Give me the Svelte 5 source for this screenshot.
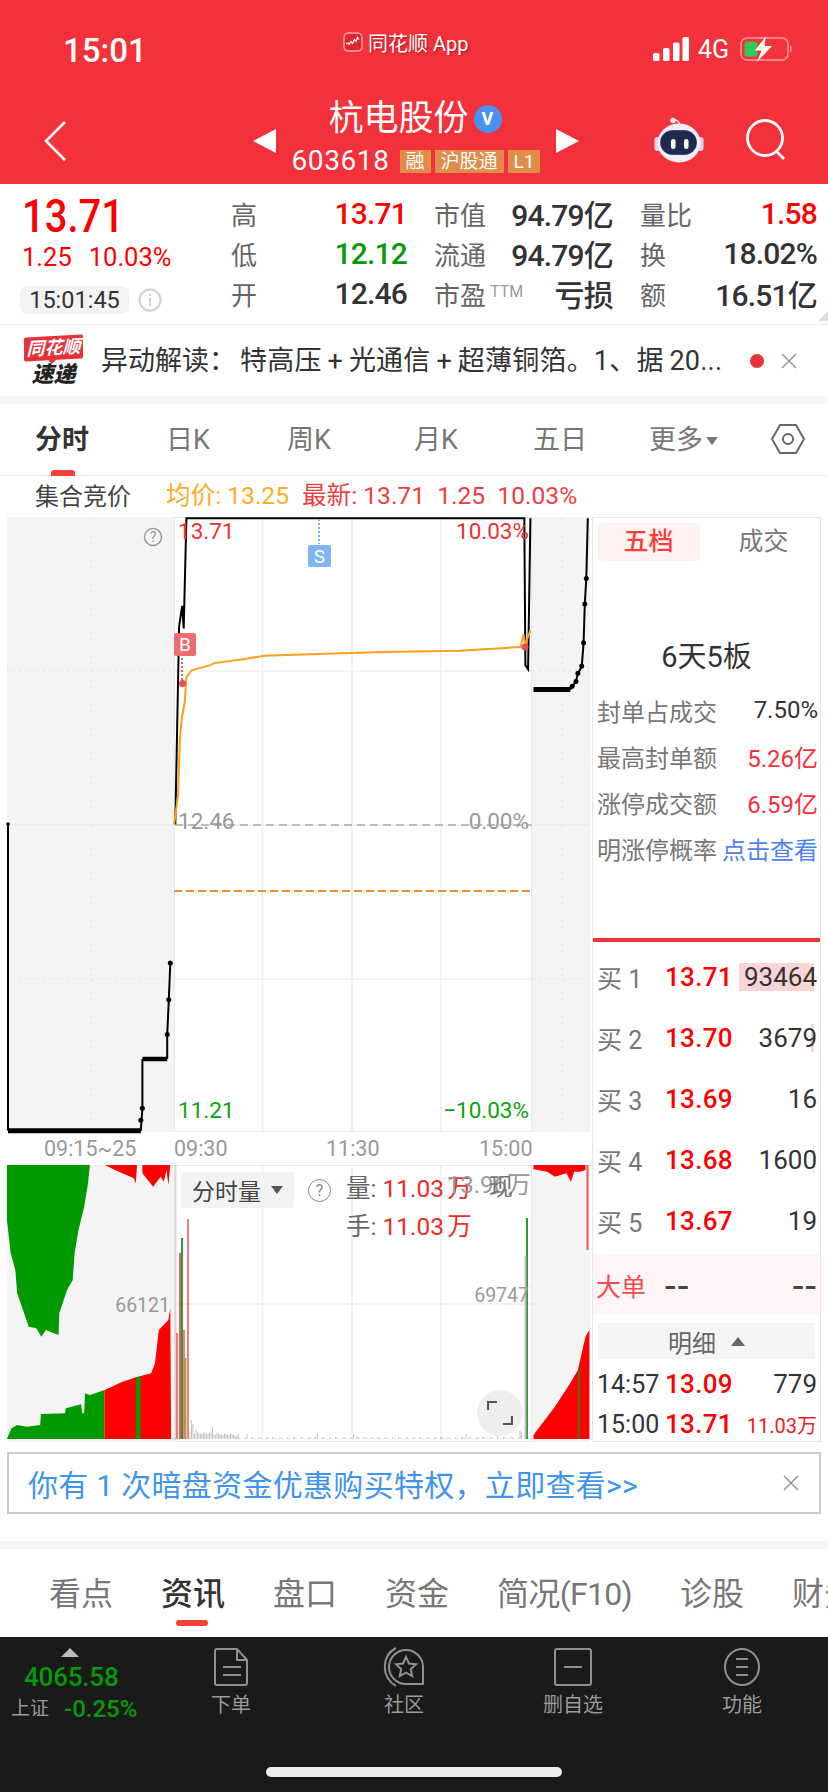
<script>
  // chart traces are kept in "trace units" and mapped to page pixels
  const px = (pts, sy, oy) => pts.map(([x, y]) => `${(x / 2.613).toFixed(1)},${(y / sy + oy).toFixed(1)}`).join(' ');
  const top = (pts) => px(pts, 2.45, 510);
  const vol = (pts) => px(pts, 3, 1140);
  const dot = ([x, y]) => ({ cx: x / 2.613, cy: y / 2.45 + 510 });

  const priceLine = top([[458,770],[468,285],[476,235],[480,290],[487,20],[1370,20],[1373,380],[1380,390],[1386,20]]);
  const avgLine = top([[455,770],[465,700],[470,560],[475,510],[483,470],[487,410],[500,393],[550,380],[560,375],[640,365],[690,357],[830,353],[1000,348],[1200,345],[1360,336],[1368,305],[1372,330],[1386,295]]);

  const preLine = top([[21,770],[21,1520]]);
  const preFlat = top([[21,1521],[368,1521]]);
  const preRise = top([[368,1521],[372,1466],[372,1345]]);
  const preStep = top([[372,1345],[437,1345]]);
  const preUp = top([[437,1345],[437,1285],[441,1200],[445,1110]]);
  const preDots = [[368,1495],[372,1466],[437,1285],[441,1200],[445,1110]].map(dot);

  const postFlat = top([[1394,440],[1490,440]]);
  const postUp = top([[1490,440],[1505,420],[1510,400],[1520,385],[1525,325],[1528,230],[1532,168],[1536,20]]);
  const postDots = [[1495,432],[1505,420],[1510,400],[1520,382],[1525,325],[1528,230],[1532,168]].map(dot);

  const auctionGreenTop = vol([[18,75],[235,75],[230,130],[220,200],[205,270],[195,340],[190,420],[175,450],[155,520],[153,585],[120,570],[108,590],[95,565],[75,560],[60,510],[45,460],[40,390],[28,340],[18,240]]);
  const auctionRedTop = vol([[275,75],[300,90],[350,115],[355,130],[358,75],[372,75],[372,100],[400,140],[420,110],[428,125],[435,90],[440,135],[445,75]]);
  const auctionGreen = vol([[18,897],[30,865],[45,855],[70,860],[105,855],[107,822],[170,820],[172,805],[212,793],[215,820],[220,820],[222,760],[235,765],[273,750],[273,897]]);
  const auctionRed = vol([[273,750],[320,725],[355,712],[395,700],[405,670],[415,570],[440,540],[445,505],[447,897],[273,897]]);
  const auctionStrip = vol([[355,712],[367,710],[367,897],[355,897]]);

  const closeRedTop = vol([[1394,75],[1530,75],[1530,90],[1515,95],[1500,95],[1492,125],[1480,100],[1450,110],[1430,95],[1394,88]]);
  const closeRed = vol([[1394,897],[1394,885],[1450,800],[1490,730],[1510,690],[1520,640],[1530,590],[1540,570],[1540,897]]);

  // volume bars, x in page px, y = top of bar
  const bars = [
    { x: 177, y: 1333, c: '#ee6d6d' }, { x: 180, y: 1253, c: '#e84b4b' }, { x: 182, y: 1238, c: '#1a8f1a' },
    { x: 184, y: 1330, c: '#f07070' }, { x: 185.5, y: 1358, c: '#9a9a50' }, { x: 188, y: 1219, c: '#f07070' },
    { x: 527, y: 1218, c: '#1a8f1a' }, { x: 525.5, y: 1256, c: '#bbb' }
  ];
  const tiny = [];
  const tall = { 191: 1415, 192: 1420, 193: 1424, 194: 1428, 196: 1430, 213: 1427, 263: 1429, 247: 1434, 318: 1433, 354: 1434, 466: 1434, 498: 1434, 520: 1430, 522: 1432 };
  for (let x = 190; x < 524; x += 1.5) {
    const k = Math.round(x);
    const gap = (k % 7) * 0.4;
    const base = k < 240 ? 1434 - (240 - k) * 0.06 : 1437;
    tiny.push({ x, y: tall[k] ?? base + gap });
  }

  const quote = [
    [{ l: '高', v: '13.71', c: 'up' }, { l: '市值', v: '94.79亿' }, { l: '量比', v: '1.58', c: 'up' }],
    [{ l: '低', v: '12.12', c: 'down' }, { l: '流通', v: '94.79亿' }, { l: '换', v: '18.02%' }],
    [{ l: '开', v: '12.46' }, { l: '市盈', sup: 'TTM', v: '亏损' }, { l: '额', v: '16.51亿' }]
  ];
  const stats = [
    { l: '封单占成交', v: '7.50%' },
    { l: '最高封单额', v: '5.26亿', c: 'up' },
    { l: '涨停成交额', v: '6.59亿', c: 'up' },
    { l: '明涨停概率', v: '点击查看', c: 'link' }
  ];
  const book = [
    { l: '买 1', p: '13.71', q: '93464', w: 75 },
    { l: '买 2', p: '13.70', q: '3679', w: 3 },
    { l: '买 3', p: '13.69', q: '16', w: 0 },
    { l: '买 4', p: '13.68', q: '1600', w: 1 },
    { l: '买 5', p: '13.67', q: '19', w: 0 }
  ];
  const periods = ['日K', '周K', '月K', '五日'];
  const infoTabs = ['看点', '资讯', '盘口', '资金', '简况(F10)', '诊股', '财务'];
</script>

<div class="page">
  <header class="head">
    <div class="status">
      <span class="clock">15:01</span>
      <span class="carrier">
        <svg width="20" height="20" viewBox="0 0 20 20">
          <rect x="1" y="1" width="18" height="18" rx="4.500" fill="#e2252c" stroke="#f9a5a7" stroke-width="1.500" />
          <path d="M3 12l2-1 1 1.500 2-3 1.500 2 2-4 1.500 2 1.500-4 1.500 2" fill="none" stroke="#fff" stroke-width="1.200" />
        </svg>
        同花顺 App
      </span>
      <span class="indicators">
        <svg width="36" height="24" viewBox="0 0 36 24" fill="#fff">
          <rect x="0" y="16" width="6.500" height="8" rx="1.500" />
          <rect x="10" y="11" width="6.500" height="13" rx="1.500" />
          <rect x="20" y="5.500" width="6.500" height="18.500" rx="1.500" />
          <rect x="29.500" y="0" width="6.500" height="24" rx="1.500" />
        </svg>
        <span class="net">4G</span>
        <svg width="54" height="26" viewBox="0 0 54 26">
          <rect x="1" y="2" width="47" height="22" rx="6" fill="none" stroke="#fa9ba0" stroke-width="1.600" />
          <rect x="4.500" y="5.500" width="13" height="15" rx="3" fill="#2fc85a" />
          <path d="M50 9c2 .5 2 7 0 8z" fill="#fa9ba0" />
          <path d="M26 0L15 14.500h6.500L17 26 32 10h-7.500z" fill="#fff" />
        </svg>
      </span>
    </div>
    <nav class="nav">
      <svg class="back" width="24" height="40" viewBox="0 0 24 40" fill="none" stroke="#fff" stroke-width="2.600">
        <path d="M22 1L3 20l19 19" />
      </svg>
      <div class="stock">
        <i class="tri left"></i>
        <div class="stock-name">
          <div class="title">杭电股份<span class="verified">V</span></div>
          <div class="code">603618<span class="tag">融</span><span class="tag">沪股通</span><span class="tag">L1</span></div>
        </div>
        <i class="tri right"></i>
      </div>
      <div class="tools">
        <svg width="50" height="46" viewBox="0 0 50 46">
          <circle cx="19" cy="3.500" r="2.800" fill="#efeafa" />
          <path d="M20 3c3 0 5 1 6 5" fill="none" stroke="#efeafa" stroke-width="1.500" />
          <rect x="0.500" y="20" width="6" height="14" rx="3" fill="#d9d5ef" />
          <rect x="43.500" y="20" width="6" height="14" rx="3" fill="#d9d5ef" />
          <ellipse cx="25" cy="26" rx="21.500" ry="19.500" fill="#f1eefa" />
          <rect x="6" y="13" width="37" height="25" rx="12.500" fill="#7b5fe0" />
          <rect x="6.500" y="13.500" width="36" height="24" rx="12" fill="#1f2b4a" />
          <rect x="17" y="22" width="4.500" height="10" rx="2.200" fill="#fff" />
          <rect x="30" y="22" width="4.500" height="10" rx="2.200" fill="#fff" />
        </svg>
        <svg width="42" height="42" viewBox="0 0 42 42" fill="none" stroke="#fff" stroke-width="2.800">
          <circle cx="20" cy="19" r="17.500" />
          <path d="M32 33l7 7" />
        </svg>
      </div>
    </nav>
  </header>

  <section class="quote">
    <div class="price">
      <div class="last">13.71</div>
      <div class="change"><span>1.25</span><span>10.03%</span></div>
      <div class="clock-row">
        <span class="time-pill">15:01:45</span>
        <svg width="24" height="26" viewBox="0 0 24 26" fill="none" stroke="#d0d0d0" stroke-width="2">
          <circle cx="12" cy="13" r="10.500" />
          <path d="M12 11v8M12 7v2" />
        </svg>
      </div>
    </div>
    <div class="fields">
      {#each quote as row}
        {#each row as f}
          <div class="field">
            <span class="f-label">{f.l}{#if f.sup}<sup>{f.sup}</sup>{/if}</span>
            <span class="f-value {f.c ?? ''}">{f.v}</span>
          </div>
        {/each}
      {/each}
    </div>
    <i class="corner"></i>
  </section>

  <section class="news">
    <div class="logo">
      <span class="logo-top">同花顺</span>
      <span class="logo-bottom">速递</span>
    </div>
    <p class="news-text">异动解读：<span class="wide">特高压 + 光通信 + 超薄铜箔。1、据 20...</span></p>
    <i class="news-dot"></i>
    <svg class="x" width="16" height="16" viewBox="0 0 16 16" stroke="#999" stroke-width="1.600"><path d="M1 1l14 14M15 1L1 15" /></svg>
  </section>

  <nav class="periods">
    <span class="period active">分时</span>
    {#each periods as p}
      <span class="period">{p}</span>
    {/each}
    <span class="period more">更多<i class="more-caret"></i></span>
    <svg class="hex" width="34" height="30" viewBox="0 0 34 30" fill="none" stroke="#666" stroke-width="2">
      <path d="M9 1h16l8 14-8 14H9L1 15z" />
      <circle cx="17" cy="15" r="5" />
    </svg>
  </nav>

  <div class="legend">
    <span class="auction">集合竞价</span>
    <span class="avg">均价: 13.25</span>
    <span class="latest">最新: 13.71&nbsp; 1.25&nbsp; 10.03%</span>
  </div>

  <section class="board">
    <div class="charts">
      <div class="panels price-panels"><div class="aux aux-l"></div><div class="main"></div><div class="aux aux-r"></div></div>
      <div class="axis"><span>09:15~25</span><span>09:30</span><span>11:30</span><span>15:00</span></div>
      <div class="panels vol-panels">
        <div class="aux aux-l"></div>
        <div class="main">
          <div class="vol-head">
            <span class="vol-select">分时量<i></i></span>
            <span class="help">?</span>
            <div class="vol-read">
              <span>量: <b>11.03 万</b></span>
              <span>手: <b>11.03 万</b></span>
            </div>
          </div>
          <span class="max-vol">13.96万</span>
          <span class="now-vol">现</span>
          <button class="expand" aria-label="全屏">
            <svg width="26" height="26" viewBox="0 0 26 26" fill="none" stroke="#555" stroke-width="2.200">
              <path d="M1 10V2h9M25 16v8h-9" />
            </svg>
          </button>
        </div>
        <div class="aux aux-r"></div>
      </div>

      <svg class="overlay" width="592" height="925" viewBox="0 517 592 925">
        <g stroke="#eeeeee" stroke-width="1.500">
          <path d="M175 671H532M175 825H532M175 979H532M262.500 518V1131M352 518V1131M441 518V1131" />
          <path d="M175 1304H532M262.500 1166V1440M352 1166V1440M441 1166V1440" />
        </g>
        <g stroke="#e2e2e2" stroke-width="1" stroke-dasharray="2 4">
          <path d="M7 671H173M7 979H173M533 671H590M533 979H590M91 518V1131M562 518V1131M7 1304H173M533 1304H590" />
        </g>
        <path d="M7 825H173M533 825H590" stroke="#e4e4e4" />

        <!-- price: main -->
        <path d="M175 825H532" stroke="#aaa" stroke-width="1.500" stroke-dasharray="8 5" />
        <path d="M174 891H531" stroke="#f58a2b" stroke-width="2" stroke-dasharray="8 4" />
        <path d="M174 517H532" stroke="#f2c9a0" stroke-width="1" stroke-dasharray="6 3" />
        <polyline points={priceLine} fill="none" stroke="#000" stroke-width="2" />
        <polyline points={avgLine} fill="none" stroke="#fba01c" stroke-width="2" />
        <path d="M182 658V683" stroke="#f05a60" stroke-width="2" stroke-dasharray="2 2" />
        <circle cx="182.500" cy="683.500" r="3.500" fill="#ee4b50" />
        <circle cx="525" cy="647" r="3.500" fill="#ee4b50" />
        <rect x="174" y="633" width="22" height="23" rx="2" fill="#ec6d72" />
        <text class="mark" x="185" y="651">B</text>
        <path d="M319 519V544" stroke="#7fb5f5" stroke-width="2" stroke-dasharray="2 2" />
        <rect x="308" y="545" width="23" height="22" rx="2" fill="#7fb5f5" />
        <text class="mark" x="319.500" y="563">S</text>

        <text class="lbl up" x="178" y="539">13.71</text>
        <text class="lbl up end" x="529" y="539">10.03%</text>
        <text class="lbl flat" x="178" y="829">12.46</text>
        <text class="lbl flat end" x="529" y="829">0.00%</text>
        <text class="lbl down" x="178" y="1118">11.21</text>
        <text class="lbl down end" x="529" y="1118">−10.03%</text>

        <!-- price: auction and after-hours -->
        <circle cx="153" cy="537" r="8.500" fill="none" stroke="#999" stroke-width="1.500" />
        <text class="help-mark" x="153" y="542">?</text>
        <polyline points={preLine} fill="none" stroke="#000" stroke-width="2" />
        <circle cx="8" cy="824" r="1.800" fill="#000" />
        <polyline points={preFlat} fill="none" stroke="#000" stroke-width="5" />
        <polyline points={preRise} fill="none" stroke="#000" stroke-width="2" />
        <polyline points={preStep} fill="none" stroke="#000" stroke-width="4.500" />
        <polyline points={preUp} fill="none" stroke="#000" stroke-width="2" />
        {#each preDots as d}<circle cx={d.cx} cy={d.cy} r="2.500" fill="#000" />{/each}
        <polyline points={postFlat} fill="none" stroke="#000" stroke-width="5" />
        <polyline points={postUp} fill="none" stroke="#000" stroke-width="2" />
        {#each postDots as d}<circle cx={d.cx} cy={d.cy} r="2.500" fill="#000" />{/each}

        <!-- volume -->
        <polygon points={auctionGreenTop} fill="#009900" />
        <polygon points={auctionRedTop} fill="#ff0000" />
        <polygon points={auctionGreen} fill="#009900" />
        <polygon points={auctionRed} fill="#ff0000" />
        <polygon points={auctionStrip} fill="#009900" />
        <text class="lbl flat small end" x="170" y="1312">66121</text>
        <polygon points={closeRedTop} fill="#ff0000" />
        <polygon points={closeRed} fill="#ff0000" />
        <path d="M579 1370V1439" stroke="#089908" stroke-width="1.500" />
        <path d="M587.500 1165V1250" stroke="#f25050" stroke-width="2" />
        <path d="M175.500 1165V1440" stroke="#d8d8d8" stroke-width="2" />
        {#each tiny as b}<line x1={b.x} x2={b.x} y1={b.y} y2="1439" stroke="#c4c4c4" stroke-width="1" />{/each}
        {#each bars as b}<line x1={b.x} x2={b.x} y1={b.y} y2="1439" stroke={b.c} stroke-width="1.800" />{/each}
        <text class="lbl flat small end" x="529" y="1302">69747</text>
      </svg>
    </div>

    <aside class="side">
      <div class="side-tabs"><span class="side-tab on">五档</span><span class="side-tab">成交</span></div>
      <div class="limit-title">6天5板</div>
      <div class="stats">
        {#each stats as s}
          <div class="stat"><span>{s.l}</span><b class={s.c ?? ''}>{s.v}</b></div>
        {/each}
      </div>
      <div class="book">
        {#each book as o}
          <div class="order">
            <span class="o-label">{o.l}</span>
            <span class="o-price">{o.p}</span>
            <span class="o-qty">
              {#if o.w}<i class="o-bar" style="width:{o.w}px"></i>{/if}
              <em>{o.q}</em>
            </span>
          </div>
        {/each}
      </div>
      <div class="big-order"><span class="big-l">大单</span><span class="big-v">--</span><span class="big-q">--</span></div>
      <div class="detail-head">明细<i></i></div>
      <div class="tick"><span class="t-time">14:57</span><span class="o-price">13.09</span><span class="t-qty">779</span></div>
      <div class="tick"><span class="t-time">15:00</span><span class="o-price">13.71</span><span class="t-qty small">11.03万</span></div>
    </aside>
  </section>

  <div class="promo">
    <span>你有 1 次暗盘资金优惠购买特权，立即查看&gt;&gt;</span>
    <svg width="16" height="16" viewBox="0 0 16 16" stroke="#999" stroke-width="1.600"><path d="M1 1l14 14M15 1L1 15" /></svg>
  </div>

  <nav class="info-tabs">
    {#each infoTabs as t}
      <span class="info-tab" class:on={t === '资讯'} class:tight={t === '简况(F10)'}>{t}</span>
    {/each}
  </nav>

  <footer class="dock">
    <div class="index">
      <i class="idx-tri"></i>
      <div class="idx-value">4065.58</div>
      <div class="idx-row"><span>上证</span><b>-0.25%</b></div>
    </div>
    <div class="dock-item d1">
      <svg width="36" height="40" viewBox="0 0 36 40" fill="none" stroke="#8f8f8f" stroke-width="2">
        <path d="M4 2h20l10 11v23a2 2 0 0 1-2 2H4a2 2 0 0 1-2-2V4a2 2 0 0 1 2-2zM24 2v11h10M10 20h18M10 28h18" />
      </svg>
      <span>下单</span>
    </div>
    <div class="dock-item d2">
      <svg width="42" height="40" viewBox="0 0 42 40" fill="none" stroke="#8f8f8f" stroke-width="2">
        <path d="M13 1C-2 9-2 30 13 39" />
        <path d="M40 37H23A17 17 0 1 1 40 20z" />
        <path d="M23 10l3 6.500 7 .8-5.200 4.800 1.400 7-6.200-3.500-6.200 3.500 1.400-7-5.200-4.800 7-.8z" />
      </svg>
      <span>社区</span>
    </div>
    <div class="dock-item d3">
      <svg width="38" height="40" viewBox="0 0 38 40" fill="none" stroke="#8f8f8f" stroke-width="2">
        <rect x="1" y="2" width="36" height="36" rx="2" />
        <path d="M10 20h18" />
      </svg>
      <span>删自选</span>
    </div>
    <div class="dock-item d4">
      <svg width="38" height="40" viewBox="0 0 38 40" fill="none" stroke="#8f8f8f" stroke-width="2">
        <ellipse cx="19" cy="20" rx="17" ry="18" />
        <path d="M13 12h12M13 20h12M13 28h12" />
      </svg>
      <span>功能</span>
    </div>
    <i class="home-bar"></i>
  </footer>
</div>

<style>
  :global(body) {
    margin: 0;
    background: #fff;
  }

  .page {
    position: relative;
    width: 828px;
    height: 1792px;
    overflow: hidden;
    background: #fff;
    font-family: Roboto, "Noto Sans CJK SC", sans-serif;
    color: #333;
  }

  i {
    display: block;
    font-style: normal;
  }

  /* header */
  .head {
    height: 184px;
    background: #f3313b;
    color: #fff;
  }

  .status {
    height: 96px;
    display: grid;
    grid-template-columns: 340px 1fr auto;
    align-items: center;
    padding: 0 34px 0 63px;
    box-sizing: border-box;
  }

  .clock {
    font-size: 33px;
    font-weight: 500;
    position: relative;
    top: 2px;
  }

  .carrier {
    display: flex;
    align-items: center;
    gap: 5px;
    font-size: 20px;
    margin-left: -60px;
    margin-top: -12px;
    text-shadow: 1px 1px 2px rgba(120, 0, 0, 0.6);
  }

  .indicators {
    display: flex;
    align-items: center;
    gap: 9px;
    margin-top: 2px;
  }

  .net {
    font-size: 25px;
    margin-right: 2px;
  }

  .nav {
    height: 88px;
    display: grid;
    grid-template-columns: 253px 326px 1fr;
    align-items: center;
  }

  .back {
    margin-left: 43px;
    margin-top: 2px;
  }

  .stock {
    display: flex;
    align-items: center;
    justify-content: space-between;
  }

  .tri {
    width: 0;
    height: 0;
    border-top: 12.5px solid transparent;
    border-bottom: 12.5px solid transparent;
    margin-top: 2px;
  }

  .tri.left {
    border-right: 23px solid #fff;
  }

  .tri.right {
    border-left: 23px solid #fff;
  }

  .stock-name {
    display: flex;
    flex-direction: column;
    align-items: center;
    margin-top: -4px;
  }

  .title {
    display: flex;
    align-items: center;
    gap: 5px;
    font-size: 35px;
    line-height: 46px;
    margin-left: -2px;
  }

  .verified {
    width: 28px;
    height: 28px;
    border-radius: 50%;
    background: #4a90ee;
    display: flex;
    align-items: center;
    justify-content: center;
    font-size: 18px;
    font-weight: 700;
    line-height: 1;
  }

  .code {
    display: flex;
    align-items: center;
    font-size: 28px;
    line-height: 38px;
    gap: 4px;
    letter-spacing: 0.6px;
  }

  .tag {
    height: 23px;
    padding: 0 6px;
    background: #e08d4a;
    font-size: 19px;
    line-height: 23px;
    letter-spacing: 0;
  }

  .code .tag:first-of-type {
    margin-left: 6px;
  }

  .tools {
    display: flex;
    align-items: center;
    gap: 41px;
    margin-left: 75px;
  }

  /* quote */
  .quote {
    position: relative;
    height: 141px;
    box-sizing: border-box;
    border-bottom: 1px solid #ececec;
    display: flex;
    padding-top: 9px;
  }

  .price {
    width: 231px;
    padding-left: 20px;
    box-sizing: border-box;
    flex-shrink: 0;
  }

  .last {
    font-size: 47px;
    font-weight: 500;
    line-height: 46px;
    color: #fd0000;
    margin-left: 2px;
    transform: scaleX(0.85);
    transform-origin: left center;
  }

  .change {
    display: flex;
    gap: 17px;
    color: #fd0000;
    font-size: 25.5px;
    line-height: 30px;
    margin: 3px 0 14px 2px;
  }

  .clock-row {
    display: flex;
    align-items: center;
    gap: 9px;
  }

  .time-pill {
    width: 109px;
    height: 28px;
    background: #f3f3f3;
    border-radius: 8px;
    font-size: 23.5px;
    line-height: 28px;
    text-align: center;
  }

  .fields {
    display: grid;
    grid-template-columns: 176px 179px 177px;
    grid-auto-rows: 40px;
    column-gap: 27px;
    height: 120px;
  }

  .field {
    display: flex;
    align-items: center;
    justify-content: space-between;
  }

  .f-label {
    font-size: 26px;
    color: #666;
    white-space: nowrap;
  }

  .f-label sup {
    font-size: 16px;
    color: #999;
    margin-left: 4px;
    vertical-align: 8px;
    line-height: 0;
  }

  .f-value {
    font-size: 30px;
    font-weight: 500;
    color: #333;
    letter-spacing: -0.8px;
  }

  .up {
    color: #fd0000;
  }

  .down {
    color: #089908;
  }

  .corner {
    position: absolute;
    right: 0;
    bottom: 3px;
    width: 0;
    height: 0;
    border-left: 10px solid transparent;
    border-bottom: 10px solid #ddd;
  }

  /* news ticker */
  .news {
    height: 71px;
    display: flex;
    align-items: center;
    padding-left: 24px;
    border-bottom: 8px solid #f4f4f4;
  }

  .logo {
    width: 59px;
    display: flex;
    flex-direction: column;
    align-items: center;
    gap: 4px;
    margin-right: 18px;
    font-style: italic;
  }

  .logo-top {
    position: relative;
    width: 59px;
    height: 24px;
    background: #e6323a;
    color: #fff;
    border-radius: 2px;
    font-size: 18px;
    font-weight: 700;
    line-height: 24px;
    text-align: center;
    transform: skewY(-3deg);
  }

  .logo-top::after {
    content: '';
    position: absolute;
    left: 24px;
    top: 24px;
    border-left: 4px solid transparent;
    border-right: 4px solid transparent;
    border-top: 4px solid #e6323a;
  }

  .logo-bottom {
    font-size: 22px;
    line-height: 22px;
    font-weight: 900;
    color: #222;
  }

  .news-text {
    margin: 0;
    width: 656px;
    font-size: 27px;
    line-height: 36px;
    color: #333;
    white-space: nowrap;
  }

  .news-text .wide {
    margin-left: 4px;
    word-spacing: -1px;
    letter-spacing: 0.2px;
  }

  .news-dot {
    width: 14px;
    height: 14px;
    border-radius: 50%;
    background: #e8323a;
    margin-right: 17px;
    margin-left: -7px;
  }

  /* period tabs */
  .periods {
    height: 72px;
    box-sizing: border-box;
    border-bottom: 1px solid #ececec;
    display: flex;
    align-items: center;
    position: relative;
    padding-bottom: 1px;
  }

  .period {
    position: absolute;
    font-size: 27px;
    color: #777;
    line-height: 36px;
    top: 18px;
  }

  .period:nth-child(1) { left: 35px; }
  .period:nth-child(2) { left: 166px; }
  .period:nth-child(3) { left: 287px; }
  .period:nth-child(4) { left: 414px; }
  .period:nth-child(5) { left: 533px; }

  .period.active {
    color: #333;
    font-weight: 700;
  }

  .period.active::after {
    content: '';
    position: absolute;
    left: 16px;
    top: 48px;
    width: 24px;
    height: 6px;
    border-radius: 3px 3px 0 0;
    background: #f5403a;
  }

  .period.more {
    left: 649px;
    display: flex;
    align-items: center;
    gap: 3px;
  }

  .more-caret {
    border-left: 6px solid transparent;
    border-right: 6px solid transparent;
    border-top: 8px solid #777;
    margin-top: 1px;
  }

  .hex {
    margin-left: 771px;
  }

  .legend {
    height: 41px;
    display: flex;
    align-items: center;
    font-size: 24.6px;
    padding-left: 35px;
    box-sizing: border-box;
    line-height: 1;
  }

  .auction {
    color: #444;
    width: 131px;
    font-size: 24px;
  }

  .avg {
    color: #fbad26;
    width: 136px;
  }

  .latest {
    color: #ee3d42;
  }

  /* chart board */
  .board {
    height: 925px;
    display: flex;
  }

  .charts {
    position: relative;
    width: 592px;
    flex-shrink: 0;
  }

  .overlay {
    position: absolute;
    left: 0;
    top: 0;
    pointer-events: none;
  }

  .panels {
    display: flex;
    padding-left: 7px;
  }

  .price-panels {
    height: 615px;
  }

  .vol-panels {
    height: 277px;
  }

  .aux {
    background: #f4f4f4;
  }

  .aux-l {
    width: 167px;
  }

  .aux-r {
    width: 58px;
  }

  .main {
    position: relative;
    width: 358px;
    box-sizing: border-box;
    border: 1.5px solid #e8e8e8;
    background: #fff;
  }

  .axis {
    height: 33px;
    position: relative;
    display: grid;
    grid-template-columns: 130px 152px 153px auto;
    padding-left: 44px;
    font-size: 21.5px;
    line-height: 33px;
    color: #999;
  }

  .vol-head {
    display: flex;
    align-items: flex-start;
    padding: 6px 0 0 6px;
    position: relative;
    z-index: 2;
  }

  .vol-select {
    width: 113px;
    height: 36px;
    border-radius: 4px;
    background: #f2f2f2;
    display: flex;
    align-items: center;
    gap: 10px;
    padding-left: 11px;
    box-sizing: border-box;
    font-size: 23px;
    color: #444;
  }

  .vol-select i {
    border-left: 6px solid transparent;
    border-right: 6px solid transparent;
    border-top: 8px solid #555;
  }

  .help {
    width: 21px;
    height: 21px;
    margin: 7px 0 0 14px;
    border: 1.5px solid #888;
    border-radius: 50%;
    font-size: 16px;
    line-height: 21px;
    text-align: center;
    color: #888;
  }

  .vol-read {
    display: flex;
    flex-direction: column;
    margin-left: 15px;
    font-size: 24.5px;
    line-height: 38px;
    color: #666;
    margin-top: -2px;
    white-space: nowrap;
  }

  .vol-read b {
    font-weight: 400;
    color: #f02a2a;
    word-spacing: -3px;
  }

  .max-vol,
  .now-vol {
    position: absolute;
    top: 4px;
    font-size: 24px;
    line-height: 30px;
    color: #999;
    z-index: 3;
  }

  .max-vol {
    right: 0;
  }

  .now-vol {
    left: 314px;
    top: 6px;
    color: #777;
  }

  .expand {
    position: absolute;
    left: 302px;
    top: 224px;
    width: 46px;
    height: 46px;
    padding: 0;
    border: 0;
    border-radius: 50%;
    background: #eee;
    display: flex;
    align-items: center;
    justify-content: center;
    z-index: 2;
  }

  .overlay text {
    font-family: Roboto, "Noto Sans CJK SC", sans-serif;
  }

  .lbl {
    font-size: 22.5px;
  }

  .lbl.small {
    font-size: 19.5px;
  }

  .lbl.end {
    text-anchor: end;
  }

  .lbl.up {
    fill: #ee2f36;
  }

  .lbl.down {
    fill: #0aa50c;
  }

  .lbl.flat {
    fill: #999;
  }

  .mark {
    font-size: 19px;
    fill: #fff;
    text-anchor: middle;
  }

  .help-mark {
    font-size: 14px;
    fill: #999;
    text-anchor: middle;
  }

  /* right side panel */
  .side {
    width: 229px;
    height: 925px;
    box-sizing: border-box;
    border: 1px solid #e6e6e6;
    display: flex;
    flex-direction: column;
  }

  .side-tabs {
    display: flex;
    padding: 5px 4px 0;
    align-items: center;
  }

  .side-tab {
    width: 103px;
    height: 38px;
    border-radius: 5px;
    font-size: 25px;
    line-height: 38px;
    text-align: center;
    color: #777;
  }

  .side-tab + .side-tab {
    margin-left: 12px;
  }

  .side-tab.on {
    background: #fff2f1;
    color: #f5403a;
    font-weight: 500;
  }

  .limit-title {
    margin-top: 76px;
    height: 40px;
    font-size: 29px;
    line-height: 40px;
    text-align: center;
    color: #333;
  }

  .stats {
    margin-top: 10px;
    padding: 0 2px 0 4px;
    height: 251px;
    flex-shrink: 0;
  }

  .stat {
    height: 46px;
    display: flex;
    align-items: center;
    justify-content: space-between;
    font-size: 24px;
    color: #777;
    white-space: nowrap;
  }

  .stat b {
    font-weight: 400;
    color: #333;
  }

  .stat b.up {
    color: #f92e3b;
  }

  .stat b.link {
    color: #4d82f0;
  }

  .book {
    border-top: 4px solid #ee3338;
    padding-top: 4px;
    height: 316px;
    box-sizing: border-box;
    flex-shrink: 0;
  }

  .order,
  .tick {
    display: grid;
    grid-template-columns: 68px 72px 1fr;
    align-items: center;
    padding: 0 3px 0 4px;
  }

  .order {
    height: 61px;
  }

  .o-label {
    font-size: 25px;
    color: #777;
    white-space: nowrap;
  }

  .o-price {
    font-size: 26px;
    font-weight: 500;
    color: #fd0000;
    letter-spacing: 0.3px;
  }

  .o-qty {
    position: relative;
    text-align: right;
    font-size: 26px;
    line-height: 28px;
  }

  .o-qty em {
    position: relative;
    font-style: normal;
    color: #333;
  }

  .o-bar {
    position: absolute;
    top: 0;
    right: 3px;
    height: 28px;
    background: #fad5d5;
  }

  .big-order {
    height: 61px;
    background: #fff5f6;
    display: grid;
    grid-template-columns: 68px 72px 1fr;
    align-items: center;
    padding: 0 3px 0 3px;
    flex-shrink: 0;
  }

  .big-l {
    font-size: 25px;
    color: #f24a4a;
  }

  .big-v,
  .big-q {
    font-family: "Liberation Sans", sans-serif;
    font-size: 38px;
    line-height: 1;
    color: #444;
  }

  .big-q {
    text-align: right;
  }

  .detail-head {
    margin: 8px 5px 5px;
    height: 36px;
    background: #f4f4f4;
    display: flex;
    align-items: center;
    justify-content: center;
    gap: 15px;
    font-size: 24px;
    color: #666;
    flex-shrink: 0;
  }

  .detail-head i {
    border-left: 7px solid transparent;
    border-right: 7px solid transparent;
    border-bottom: 9px solid #666;
  }

  .tick {
    height: 40px;
    flex-shrink: 0;
  }

  .t-time {
    font-size: 25px;
    color: #333;
  }

  .t-qty {
    font-size: 26px;
    text-align: right;
    color: #333;
  }

  .t-qty.small {
    font-size: 20px;
    color: #f02020;
  }

  /* promo banner */
  .promo {
    margin: 10px 7px 0;
    height: 62px;
    box-sizing: border-box;
    border: 2px solid #ccc;
    display: flex;
    align-items: center;
    justify-content: space-between;
    padding: 0 20px 0 19px;
    font-size: 30px;
    letter-spacing: 0.3px;
    color: #3f94ee;
    white-space: nowrap;
  }

  /* info tabs */
  .info-tabs {
    margin-top: 27px;
    height: 96px;
    box-sizing: border-box;
    border-top: 8px solid #f4f4f4;
    display: flex;
    gap: 48px;
    padding: 0 0 4px 49px;
    align-items: center;
    white-space: nowrap;
    overflow: hidden;
  }

  .info-tab {
    position: relative;
    font-size: 32px;
    color: #777;
    flex-shrink: 0;
  }

  .info-tab.tight {
    letter-spacing: -0.7px;
  }

  .info-tab.on {
    color: #333;
    font-weight: 500;
  }

  .info-tab.on::after {
    content: '';
    position: absolute;
    left: 15px;
    top: 52px;
    width: 32px;
    height: 6px;
    border-radius: 3px;
    background: #f5403a;
  }

  /* dock */
  .dock {
    position: relative;
    height: 156px;
    background: #1a1a1a;
    color: #999;
  }

  .index {
    position: absolute;
    left: 11px;
    top: 11px;
    width: 140px;
  }

  .idx-tri {
    margin-left: 50px;
    border-left: 9px solid transparent;
    border-right: 9px solid transparent;
    border-bottom: 9px solid #bbb;
    width: 0;
  }

  .idx-value {
    margin-left: 13px;
    margin-top: 2px;
    font-size: 26px;
    line-height: 36px;
    color: #079a07;
    font-weight: 500;
    letter-spacing: -0.2px;
  }

  .idx-row {
    display: flex;
    gap: 15px;
    align-items: center;
    line-height: 28px;
  }

  .idx-row span {
    font-size: 19px;
    color: #999;
  }

  .idx-row b {
    font-size: 24px;
    font-weight: 500;
    color: #079a07;
  }

  .dock-item {
    position: absolute;
    top: 10px;
    transform: translateX(-50%);
    display: flex;
    flex-direction: column;
    align-items: center;
    gap: 4px;
    font-size: 20px;
    line-height: 28px;
    white-space: nowrap;
  }

  .d1 { left: 231px; }
  .d2 { left: 404px; }
  .d3 { left: 573px; }
  .d4 { left: 742px; }

  .home-bar {
    position: absolute;
    left: 266px;
    top: 130px;
    width: 296px;
    height: 10px;
    border-radius: 5px;
    background: #ececec;
  }
</style>
